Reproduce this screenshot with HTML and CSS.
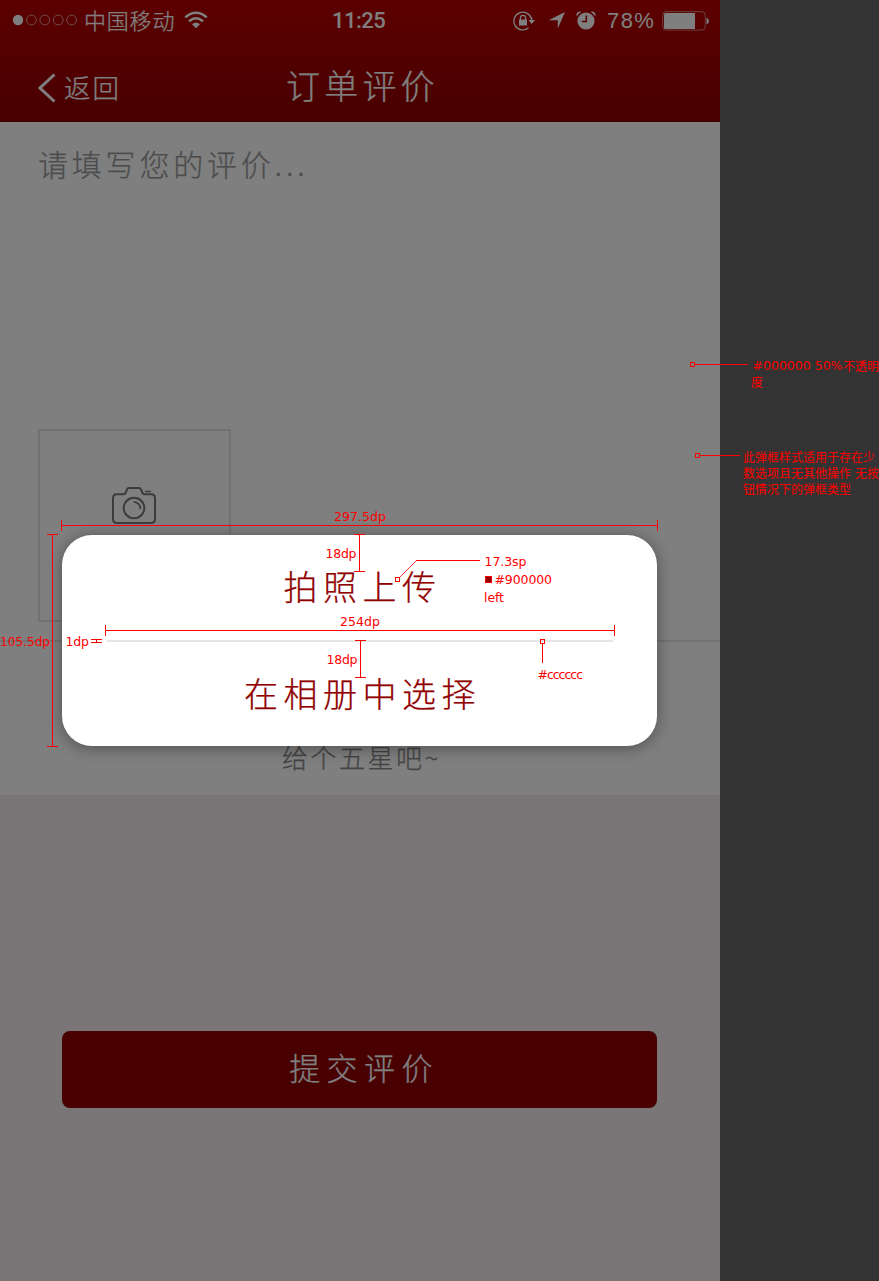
FILE: index.html
```html
<!DOCTYPE html>
<html lang="zh-CN">
<head>
<meta charset="utf-8">
<title>订单评价</title>
<link rel="stylesheet" href="styles.css">
</head>
<body>
<div class="board">
  <main class="phone">
    <header class="header">
      <div class="status">
        <svg class="signal" width="66" height="12" viewBox="0 0 66 12"><circle cx="6" cy="6" r="5.2" fill="#fff"/><g fill="none" stroke="#fff" stroke-width=".8" opacity=".75"><circle cx="19.4" cy="6" r="4.9"/><circle cx="32.8" cy="6" r="4.9"/><circle cx="46.2" cy="6" r="4.9"/><circle cx="59.6" cy="6" r="4.9"/></g></svg>
        <span class="carrier">中国移动</span>
        <svg class="wifi" width="24" height="18" viewBox="0 0 24 18"><g fill="none" stroke="#fff" stroke-width="2.5"><path d="M1.2 6.4Q12-3 22.8 6.4"/><path d="M5 10.4Q12 4.2 19 10.4"/></g><path d="M8 13.3Q12 9.8 16 13.3L12 17.2Z" fill="#fff"/></svg>
        <span class="time">11:25</span>
        <svg class="lock" width="23" height="20" viewBox="0 0 23 20"><path d="M18.4 8A8.900 8.900 0 1 0 15.500 16.800M18.700 6.500V10" fill="none" stroke="#fff" stroke-width="1.3"/><path d="M15.5 9H22L18.7 13ZM6 8.500H14V14.500H6Z" fill="#fff"/><path d="M7.400 9V7a2.600 2.600 0 0 1 5.200 0V9" fill="none" stroke="#fff" stroke-width="1.3"/></svg>
        <svg class="arrow" width="18" height="17" viewBox="0 0 18 17"><path d="M17 0L9.8 16.5V8.3H.5Z" fill="#fff"/></svg>
        <svg class="alarm" width="20" height="19" viewBox="0 0 20 19"><circle cx="10" cy="10" r="8.6" fill="#fff"/><path d="M1 4.5Q1.3 1.5 4.5 1M19 4.5Q18.7 1.5 15.5 1" fill="none" stroke="#fff" stroke-width="1.6"/><path d="M10.3 4.5V10.5H5.8" fill="none" stroke="#b20000" stroke-width="1.5"/></svg>
        <span class="percent">78%</span>
        <svg class="battery" width="48" height="20" viewBox="0 0 48 20"><rect x=".7" y=".7" width="42.6" height="18.4" rx="3.5" fill="none" stroke="#fff" stroke-opacity=".5"/><path d="M3.500 2H33V18H3.500Q2 18 2 16.500V3.500Q2 2 3.500 2Z" fill="#fff"/><path d="M44.500 6.500Q47 8 47 10T44.500 13.500Z" fill="#fff"/></svg>
      </div>
      <nav class="nav">
        <a class="back"><svg width="18" height="30" viewBox="0 0 18 30"><path d="M16.500 1.500L2 15L16.500 28.500" fill="none" stroke="#fff" stroke-width="3"/></svg><span>返回</span></a>
        <h1 class="title">订单评价</h1>
      </nav>
    </header>
    <section class="review">
      <p class="placeholder">请填写您的评价...</p>
      <div class="photo"><svg width="44" height="37" viewBox="0 0 44 37" fill="none" stroke="#777" stroke-width="2"><path d="M5 7.200H11.500Q13 7.200 13.500 6L15 2.500Q15.500 1 17 1H27Q28.400 1 29 2.500L30.500 6Q31 7.200 32.500 7.200H39Q43 7.200 43 11.200V32Q43 36 39 36H5Q1 36 1 32V11.200Q1 7.200 5 7.200Z"/><circle cx="22" cy="21" r="10.300"/><path d="M21.500 14.800Q28.200 15.200 28.300 22M33 4.500H39" stroke-width="1.700"/></svg></div>
    </section>
    <section class="rating"><p>给个五星吧~</p></section>
    <section class="actions"><button class="submit">提交评价</button></section>
    <div class="shade"></div>
    <div class="dialog">
      <div class="option">拍照上传</div>
      <div class="rule"></div>
      <div class="option">在相册中选择</div>
    </div>
  </main>
  <svg class="notes" width="879" height="1281" viewBox="0 0 879 1281">
    <g fill="none" stroke="#f00" stroke-width="1" shape-rendering="crispEdges">
      <path d="M61.500 525.500H657.500M61.500 520V531M657.500 520V531"/>
      <path d="M52.500 534.500V746.500M47 534.500H58M47 746.500H58"/>
      <path d="M105.500 630.500H614.500M105.500 625V636M614.500 625V636"/>
      <path d="M359.500 534.500V571.500M354 534.500H365M354 571.500H365"/>
      <path d="M360.500 640.500V677.500M355 640.500H366M355 677.500H366"/>
      <path d="M91 639.500H102M91 642.500H102M96.500 639V643"/>
      <path d="M416 560.500H480M395.500 577.500H399.500V581.500H395.500Z"/>
      <path d="M540.500 639.500H544.500V643.500H540.500ZM542.500 644V663"/>
      <path d="M690.500 362.500H694.500V366.500H690.500ZM695 364.500H748"/>
      <path d="M695.500 453.500H699.500V457.500H695.500ZM700 455.500H740"/>
    </g>
    <path d="M399.500 577.500L416.500 560.500" stroke="#f00" stroke-width=".8"/>
    <rect x="485.500" y="576.500" width="6" height="6" fill="#900000" stroke="#f00"/>
    <g class="latin">
      <text x="334" y="521" textLength="52">297.5dp</text>
      <text x="0" y="646" textLength="50" lengthAdjust="spacingAndGlyphs">105.5dp</text>
      <text x="340" y="626" textLength="40">254dp</text>
      <text x="325.500" y="558" textLength="31">18dp</text>
      <text x="326.500" y="664" textLength="31">18dp</text>
      <text x="65.500" y="646" textLength="23.500">1dp</text>
      <text x="484.500" y="566" textLength="42">17.3sp</text>
      <text x="494.500" y="584" textLength="57.500">#900000</text>
      <text x="484" y="602" textLength="20">left</text>
      <text x="537.500" y="679" textLength="45.500">#cccccc</text>
      <text x="752.500" y="370" textLength="90">#000000 50%</text>
    </g>
    <g class="cjk">
      <text x="843" y="371">不透明</text>
      <text x="751" y="387">度</text>
      <text x="743" y="462">此弹框样式适用于存在少</text>
      <text x="743" y="478">数选项且无其他操作</text><text x="855" y="478">无按</text>
      <text x="743" y="494">钮情况下的弹框类型</text>
    </g>
  </svg>
</div>
</body>
</html>
```
FILE: styles.css
```css
* { box-sizing: border-box; }
body { margin: 0; background: #333; }
.board { position: relative; width: 879px; height: 1281px; overflow: hidden; background: #333; font-family: "Noto Sans CJK SC", sans-serif; font-weight: 300; }
.phone { position: relative; display: flex; flex-direction: column; width: 720px; height: 1281px; background: #f4edee; }
.header { height: 122px; flex: none; background: linear-gradient(#b80000, #900000); color: #fff; border-bottom: 1px solid #800000; }
.status { display: flex; align-items: center; height: 41px; padding-left: 12px; line-height: 40px; }
.status svg, .status span { flex: none; }
.signal { margin-right: 6px; margin-bottom: 1px; }
.carrier { width: 99px; padding-bottom: 4px; font-size: 22px; letter-spacing: .8px; white-space: nowrap; }
.wifi { margin-left: 1px; margin-bottom: 2px; }
.time { width: 181px; margin-left: 124px; font: 500 22px/42px Roboto, sans-serif; letter-spacing: -.5px; }
.lock { margin-right: 12px; }
.arrow { margin-right: 10px; }
.alarm { margin-right: 11px; margin-bottom: 1px; }
.percent { width: 55px; font: 22px/42px "Liberation Sans", sans-serif; letter-spacing: 1.4px; }
.nav { display: grid; grid-template-columns: 286px 1fr; align-items: center; height: 80px; padding-top: 13px; }
.back { display: flex; align-items: center; gap: 8px; padding-left: 38px; font-size: 26.5px; line-height: 40px; letter-spacing: 2px; }
.back span { padding-bottom: 1px; }
.carrier, .back span, .title, .placeholder, .rating p, .submit, .option { -webkit-text-stroke: .25px currentColor; }
.title { margin: 0; padding-bottom: 6px; font-size: 34px; font-weight: 300; line-height: 48px; letter-spacing: 4.200px; }
.review { height: 520px; flex: none; padding: 19px 38px 0; background: #fff; border-bottom: 2px solid #e5e5e5; }
.placeholder { height: 288px; margin: 0; color: #999; font-size: 30px; line-height: 45px; letter-spacing: 3.800px; }
.photo { display: flex; justify-content: center; width: 193px; height: 193px; padding: 56px 2px 0 0; border: 2px solid #e3e3e3; }
.rating { height: 153px; flex: none; padding: 95px 0 0 282px; background: #fff; color: #888; font-size: 26px; line-height: 40px; letter-spacing: 2.500px; }
.rating p { margin: 0; }
.actions { padding: 236px 63px 0 62px; }
.submit { display: block; width: 595px; height: 77px; padding: 0 0 6px 9px; border: 0; border-radius: 8px; background: #900000; color: #fff; font: 300 31px/71px "Noto Sans CJK SC", sans-serif; letter-spacing: 6.400px; }
.shade { position: absolute; inset: 0; background: rgba(0,0,0,.5); }
.dialog { position: absolute; left: 62px; top: 535px; width: 595px; height: 211px; border-radius: 30px; background: #fff; color: #900000; box-shadow: 0 2px 16px rgba(0,0,0,.38); }
.option { height: 105px; padding-left: 6px; text-align: center; font-size: 34px; line-height: 101px; letter-spacing: 5.500px; }
.rule { height: 2px; margin: 0 44px 0 45px; background: #e5e5e5; }
.notes { position: absolute; left: 0; top: 0; fill: #f00; }
.latin { font: 12.500px "DejaVu Sans", sans-serif; }
.cjk { font: 400 12px "Noto Sans CJK SC", sans-serif; }
```
